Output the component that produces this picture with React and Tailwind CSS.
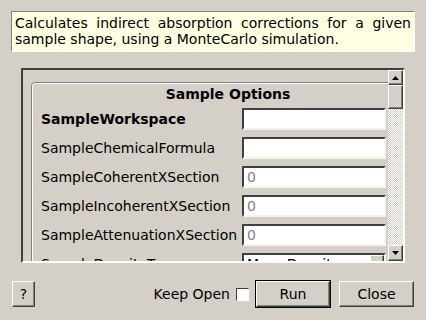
const raised =
  'border border-t-white border-l-white border-b-[#404040] border-r-[#404040] shadow-[inset_-1px_-1px_0_#808080]';
const sunken =
  'border-2 border-t-[#404040] border-l-[#404040] border-b-[#f4f3f0] border-r-[#f4f3f0]';

const Arrow = ({ down }) => (
  <svg width="7" height="4" viewBox="0 0 7 4">
    <path d={down ? 'M0 0h7L3.5 4z' : 'M0 4h7L3.5 0z'} fill="#000" />
  </svg>
);

const Field = ({ value }) => (
  <div className={`h-[22px] bg-white ${sunken} pl-[3px] leading-[18px] text-[#808080]`}>{value}</div>
);

const rows = [
  { label: 'SampleWorkspace', bold: true },
  { label: 'SampleChemicalFormula' },
  { label: 'SampleCoherentXSection', value: '0' },
  { label: 'SampleIncoherentXSection', value: '0' },
  { label: 'SampleAttenuationXSection', value: '0' },
];

export default function App() {
  return (
    <div
      className="w-[426px] h-[320px] bg-[#d4d0c8] flex flex-col pt-[11px] text-[14px] text-black overflow-hidden"
      style={{ fontFamily: '"DejaVu Sans", sans-serif' }}
    >
      {/* description */}
      <div className="mx-[11px] h-[41px] bg-[#ffffe1] border border-t-[#808080] border-l-[#808080] border-b-white border-r-white px-[3px] pt-[3px] leading-[16px] text-justify">
        Calculates indirect absorption corrections for a given sample shape, using a MonteCarlo simulation.
      </div>

      {/* scroll area */}
      <div className={`mt-[16px] ml-[21px] w-[384px] h-[195px] flex ${sunken} border-b-white border-r-white`}>
        <div className="flex-1 overflow-hidden">
          <div className="ml-[8px] mt-[12px] w-[394px] h-[300px] border border-[#808080] rounded-[4px] shadow-[inset_1px_1px_0_#fff]">
            <div className="pt-[3px] h-[20px] leading-[16px] font-bold text-center">Sample Options</div>
            <div className="mt-[5px] pl-[9px] grid grid-cols-[201px_144px] gap-y-[7px]">
              {rows.map((r) => (
                <div key={r.label} className="contents">
                  <div className={`h-[22px] leading-[22px] whitespace-nowrap ${r.bold ? 'font-bold' : ''}`}>{r.label}</div>
                  <Field value={r.value} />
                </div>
              ))}
              <div className="h-[22px] leading-[22px] whitespace-nowrap">SampleDensityType</div>
              <div className={`h-[22px] bg-white ${sunken} flex`}>
                <div className="flex-1 pl-[3px] leading-[18px]">Mass Density</div>
                <div className={`w-[14px] h-[18px] bg-[#d4d0c8] ${raised} flex items-center justify-center`}>
                  <div className="w-[6px] h-[1px] bg-black" />
                </div>
              </div>
            </div>
          </div>
        </div>
        {/* scrollbar */}
        <div className="w-[15px] flex flex-col">
          <div className={`h-[15px] bg-[#d4d0c8] ${raised} flex items-center justify-center`}>
            <Arrow />
          </div>
          <div className={`h-[24px] bg-[#d4d0c8] ${raised}`} />
          <div className="flex-1 bg-[repeating-conic-gradient(#ffffff_0_25%,#d4d0c8_0_50%)] bg-[length:2px_2px]" />
          <div className={`h-[16px] bg-[#d4d0c8] ${raised} flex items-center justify-center`}>
            <Arrow down />
          </div>
        </div>
      </div>

      {/* buttons */}
      <div className="mt-[17px] h-[28px] flex items-center pl-[12px] pr-[12px]">
        <button className={`w-[23px] h-[26px] ${raised} bg-[#d4d0c8]`}>?</button>
        <span className="ml-auto leading-[16px]">Keep Open</span>
        <span className="ml-[6px] w-[13px] h-[13px] bg-white border border-t-[#404040] border-l-[#404040] border-b-white border-r-white" />
        <div className="ml-[6px] w-[76px] h-[28px] border border-black">
          <button className={`w-full h-full ${raised} bg-[#d4d0c8]`}>Run</button>
        </div>
        <button className={`ml-[8px] w-[75px] h-[26px] ${raised} bg-[#d4d0c8]`}>Close</button>
      </div>
    </div>
  );
}
